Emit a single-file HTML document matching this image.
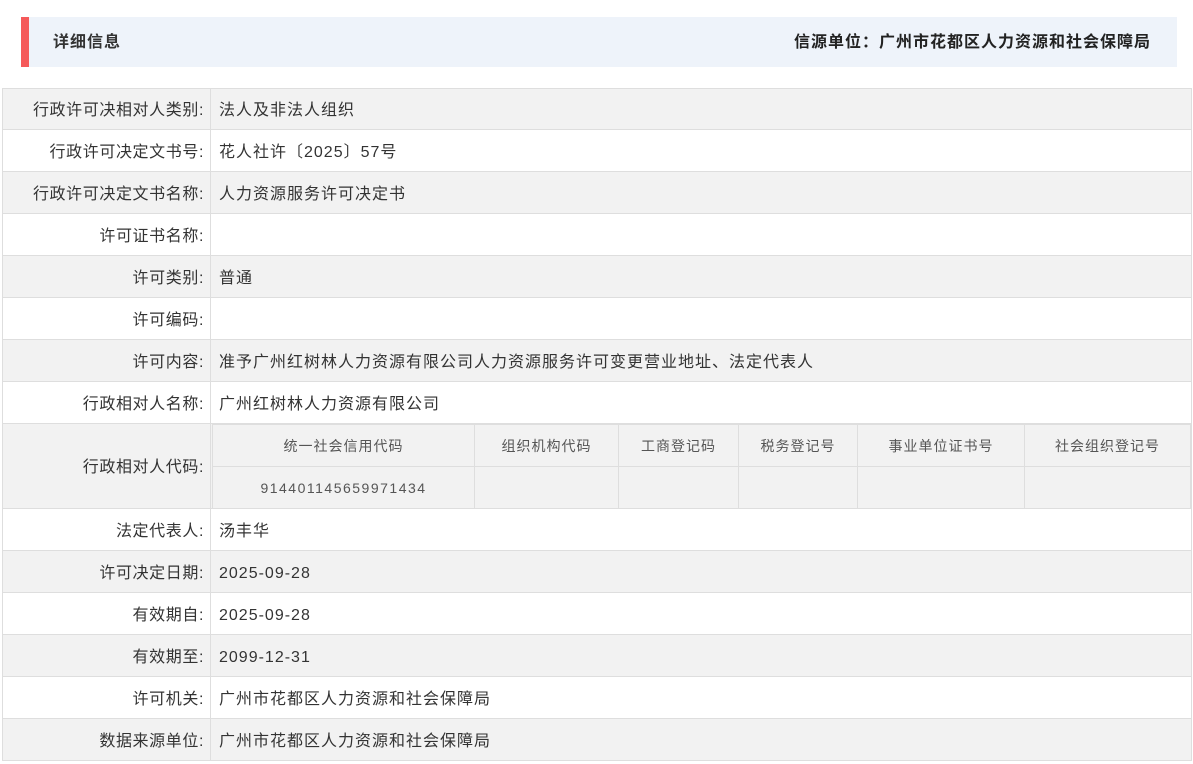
<!DOCTYPE html>
<html><head><meta charset="utf-8"><style>
*{margin:0;padding:0;box-sizing:border-box}
body{width:1193px;height:764px;background:#fff;font-family:"Liberation Sans","Noto Sans CJK SC",sans-serif;color:#333;position:relative;overflow:hidden}
.hd{position:absolute;left:21px;top:17px;width:1156px;height:50px;background:#eef3fa;border-left:8px solid #f5595a}
.hd .t{position:absolute;left:24px;top:1px;line-height:50px;font-size:16px;font-weight:bold;color:#333;letter-spacing:1px}
.hd .r{position:absolute;right:26px;top:1px;line-height:50px;font-size:16px;font-weight:bold;color:#222;letter-spacing:1px}
.row{position:absolute;left:2px;width:1190px;border:1px solid #dedede;border-top:none;font-size:16px;letter-spacing:1px}
.row.first{border-top:1px solid #dedede}
.g{background:#f2f2f2}
.l{position:absolute;left:0;top:0;bottom:0;width:208px;border-right:1px solid #dedede;text-align:right;padding-right:6px;padding-top:4px;display:flex;align-items:center;justify-content:flex-end;font-size:16px;letter-spacing:.6px;line-height:1}
.v{position:absolute;left:216px;top:0;bottom:0;padding-top:4px;display:flex;align-items:center;line-height:1}
.it{position:absolute;left:209px;top:0;width:979px;height:84px;border-collapse:collapse;font-size:14px;color:#555;letter-spacing:1px}
.it td{border:1px solid #dedede;text-align:center;height:42px;background:#f2f2f2;padding-top:1px}
</style></head><body>
<div class="hd"><span class="t">详细信息</span><span class="r">信源单位：广州市花都区人力资源和社会保障局</span></div>

<div class="row g first" style="top:88px;height:42px"><div class="l">行政许可决相对人类别:</div><div class="v">法人及非法人组织</div></div>
<div class="row" style="top:130px;height:42px"><div class="l">行政许可决定文书号:</div><div class="v">花人社许〔2025〕57号</div></div>
<div class="row g" style="top:172px;height:42px"><div class="l">行政许可决定文书名称:</div><div class="v">人力资源服务许可决定书</div></div>
<div class="row" style="top:214px;height:42px"><div class="l">许可证书名称:</div><div class="v"></div></div>
<div class="row g" style="top:256px;height:42px"><div class="l">许可类别:</div><div class="v">普通</div></div>
<div class="row" style="top:298px;height:42px"><div class="l">许可编码:</div><div class="v"></div></div>
<div class="row g" style="top:340px;height:42px"><div class="l">许可内容:</div><div class="v">准予广州红树林人力资源有限公司人力资源服务许可变更营业地址、法定代表人</div></div>
<div class="row" style="top:382px;height:42px"><div class="l">行政相对人名称:</div><div class="v">广州红树林人力资源有限公司</div></div>
<div class="row g" style="top:424px;height:85px"><div class="l">行政相对人代码:</div>
<table class="it"><tr><td style="width:262px">统一社会信用代码</td><td style="width:144px">组织机构代码</td><td style="width:120px">工商登记码</td><td style="width:119px">税务登记号</td><td style="width:167px">事业单位证书号</td><td>社会组织登记号</td></tr>
<tr><td style="letter-spacing:1.5px">914401145659971434</td><td></td><td></td><td></td><td></td><td></td></tr></table></div>
<div class="row" style="top:509px;height:42px"><div class="l">法定代表人:</div><div class="v">汤丰华</div></div>
<div class="row g" style="top:551px;height:42px"><div class="l">许可决定日期:</div><div class="v">2025-09-28</div></div>
<div class="row" style="top:593px;height:42px"><div class="l">有效期自:</div><div class="v">2025-09-28</div></div>
<div class="row g" style="top:635px;height:42px"><div class="l">有效期至:</div><div class="v">2099-12-31</div></div>
<div class="row" style="top:677px;height:42px"><div class="l">许可机关:</div><div class="v">广州市花都区人力资源和社会保障局</div></div>
<div class="row g" style="top:719px;height:42px"><div class="l">数据来源单位:</div><div class="v">广州市花都区人力资源和社会保障局</div></div>
</body></html>
